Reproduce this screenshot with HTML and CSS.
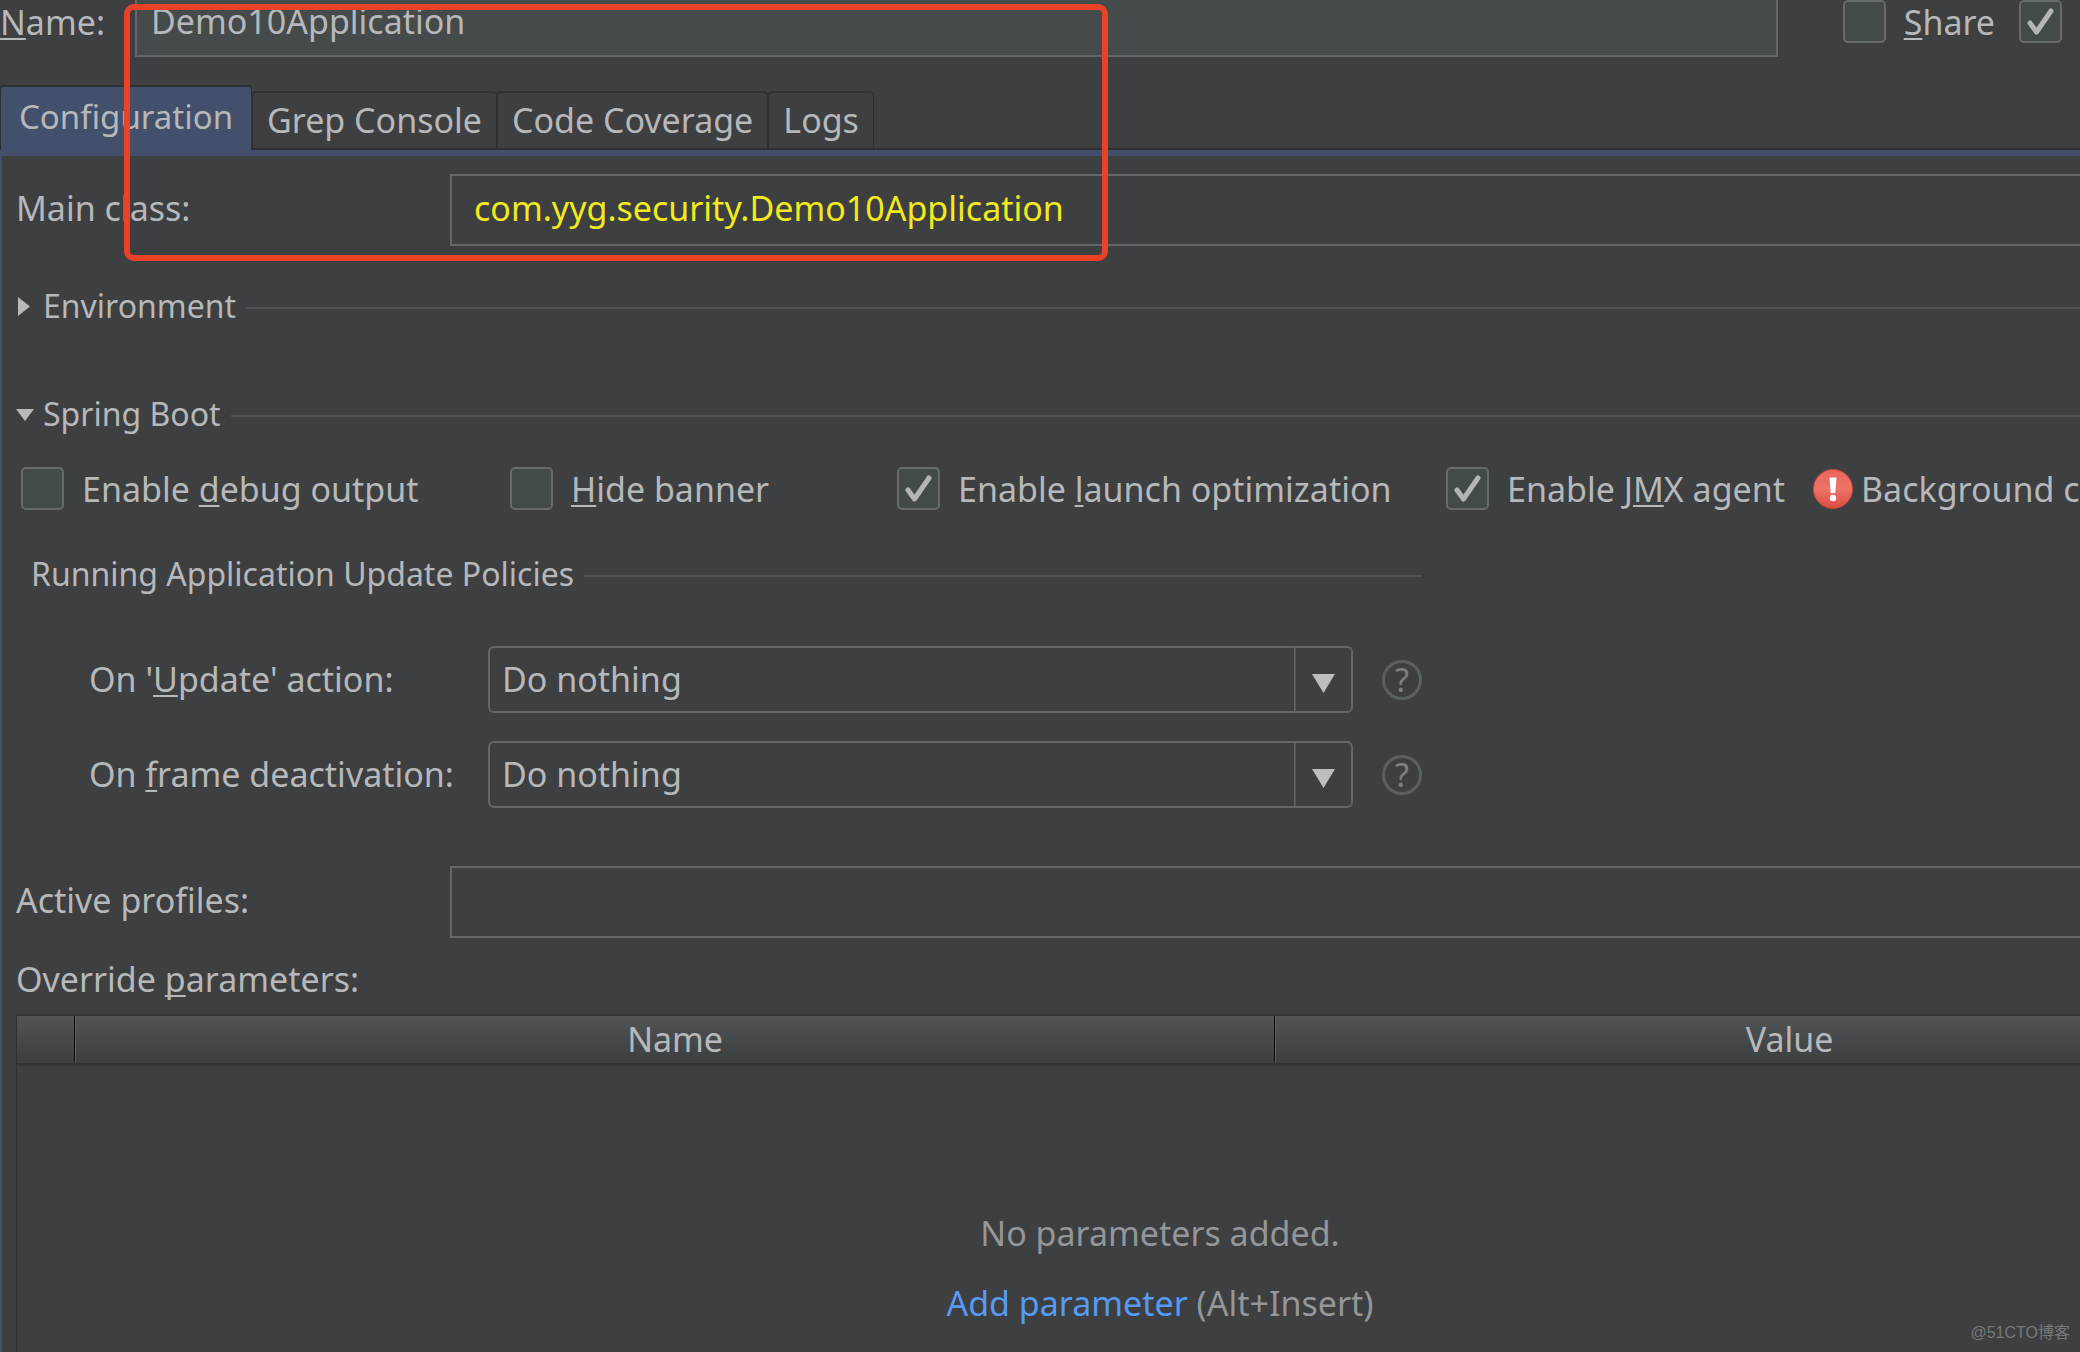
FILE: index.html
```html
<!DOCTYPE html>
<html lang="en">
<head>
<meta charset="utf-8">
<title>Run Configuration</title>
<link rel="stylesheet" href="styles.css">
</head>
<body>
<main class="dialog">
  <div class="name-row">
    <label class="name-label" for="name"><u>N</u>ame:</label>
    <input class="name-input" id="name" type="text" value="Demo10Application">
    <label class="check"><input type="checkbox"><span><u>S</u>hare</span></label>
    <input type="checkbox" checked aria-label="Allow parallel run">
  </div>

  <div class="tabs" role="tablist">
    <button class="tab tab-active" role="tab" aria-selected="true">Configuration</button>
    <button class="tab" role="tab">Grep Console</button>
    <button class="tab" role="tab">Code Coverage</button>
    <button class="tab" role="tab">Logs</button>
  </div>

  <section class="panel">
    <div class="field-row">
      <label for="main-class">Main class:</label>
      <input class="field main-class" id="main-class" type="text" value="com.yyg.security.Demo10Application">
    </div>

    <button class="section environment">
      <svg class="section-arrow" viewBox="0 0 20 20"><path d="M2 1 L14 10.5 L2 20 Z"/></svg>
      <span>Environment</span><span class="rule"></span>
    </button>
    <button class="section spring-boot">
      <svg class="section-arrow" viewBox="0 0 20 20"><path d="M0 5 H18 L9 17 Z"/></svg>
      <span>Spring Boot</span><span class="rule"></span>
    </button>

    <div class="options">
      <label class="check"><input type="checkbox"><span>Enable <u>d</u>ebug output</span></label>
      <label class="check"><input type="checkbox"><span><u>H</u>ide banner</span></label>
      <label class="check"><input type="checkbox" checked><span>Enable <u>l</u>aunch optimization</span></label>
      <label class="check"><input type="checkbox" checked><span>Enable J<u>M</u>X agent</span></label>
      <span class="warning">
        <svg width="40" height="40" viewBox="0 0 40 40">
          <defs><linearGradient id="red" x1="0" y1="0" x2="0" y2="1"><stop offset="0" stop-color="#e9655c"/><stop offset=".5" stop-color="#ee7468"/><stop offset="1" stop-color="#dc4a41"/></linearGradient></defs>
          <circle cx="20" cy="20" r="19.5" fill="url(#red)" stroke="#c9473f"/>
          <path d="M16.5 8.5 H23.5 L22.3 24 H17.7 Z" fill="#fff"/>
          <circle cx="20" cy="29" r="3.2" fill="#fff"/>
        </svg>
        <span>Background co</span>
      </span>
    </div>

    <fieldset class="policies">
      <legend class="policies-title"><span>Running Application Update Policies</span><span class="rule"></span></legend>
      <div class="policy">
        <label for="on-update">On '<u>U</u>pdate' action:</label>
        <span class="combo">
          <select id="on-update"><option>Do nothing</option></select>
          <svg class="combo-arrow" viewBox="0 0 58 65"><path d="M0.5 0 V65" class="divider"/><path d="M18 27 H41 L29.5 46 Z" class="arrow"/></svg>
        </span>
        <button class="help" aria-label="Help">?</button>
      </div>
      <div class="policy">
        <label for="on-frame">On <u>f</u>rame deactivation:</label>
        <span class="combo">
          <select id="on-frame"><option>Do nothing</option></select>
          <svg class="combo-arrow" viewBox="0 0 58 65"><path d="M0.5 0 V65" class="divider"/><path d="M18 27 H41 L29.5 46 Z" class="arrow"/></svg>
        </span>
        <button class="help" aria-label="Help">?</button>
      </div>
    </fieldset>

    <div class="field-row">
      <label for="profiles">Active profiles:</label>
      <input class="field" id="profiles" type="text">
    </div>

    <div class="override-label">Override <u>p</u>arameters:</div>
    <div class="parameters">
      <table class="param-table">
        <colgroup><col class="col-toggle"><col class="col-name"><col></colgroup>
        <thead><tr><th></th><th>Name</th><th>Value</th></tr></thead>
      </table>
      <div class="empty">
        <p>No parameters added.</p>
        <p><a href="#">Add parameter</a> (Alt+Insert)</p>
      </div>
    </div>
  </section>

  <div class="highlight"></div>
  <div class="watermark">@51CTO博客</div>
</main>
</body>
</html>
```
FILE: styles.css
```css
:root {
  --bg: #3d3f41;
  --text: #b6b8b9;
  --line: #646667;
  --rule: #505354;
  --dark: #2e3032;
  --blue: #42506c;
  --field: #454a4a;
}

* { box-sizing: border-box; }

body {
  margin: 0;
  background: var(--bg);
  color: var(--text);
  font: 34px/42px "Noto Sans", "Open Sans", sans-serif;
}

input, select, button { font: inherit; color: inherit; margin: 0; }

button { background: none; border: 0; padding: 0; text-align: left; }

u { text-decoration-thickness: 2px; text-underline-offset: 3px; text-decoration-skip-ink: none; }

.dialog {
  position: relative;
  display: flex;
  flex-direction: column;
  min-height: 100vh;
  overflow: hidden;
  white-space: nowrap;
}

/* Name row */
.name-row { display: flex; align-items: center; padding-right: 18px; }
.name-label { flex: 0 0 135px; }
.name-input {
  flex: 1;
  min-width: 0;
  height: 72px;
  margin: -16px 65px -14px 0;
  padding: 0 14px;
  background: var(--field);
  border: 2px solid var(--line);
}
.name-row .check { margin-right: 24px; }

.check { display: flex; align-items: center; gap: 18px; }

input[type="checkbox"] {
  appearance: none;
  flex: none;
  width: 43px;
  height: 43px;
  border: 2px solid #686b6c;
  border-radius: 5px;
  background: #434a4a;
}
input[type="checkbox"]:checked {
  background: #434a4a url("data:image/svg+xml,%3Csvg xmlns='http://www.w3.org/2000/svg' viewBox='0 0 39 39'%3E%3Cpath d='M9 21 L15.5 30 L30 9' fill='none' stroke='%23b4b6b6' stroke-width='5' stroke-linecap='round' stroke-linejoin='round'/%3E%3C/svg%3E") center / 39px 39px no-repeat;
}

/* Tabs */
.tabs {
  display: flex;
  align-items: flex-end;
  margin-top: 42px;
  border-bottom: 6px solid var(--blue);
  background: linear-gradient(var(--dark), var(--dark)) bottom / 100% 2px no-repeat;
}
.tab {
  height: 59px;
  padding: 0 14px 2px;
  border: 2px solid var(--dark);
  border-left-width: 1px;
  border-right-width: 1px;
  border-radius: 4px 4px 0 0;
}
.tab-active {
  height: 65px;
  padding: 0 18px 4px;
  background: var(--blue);
  border-bottom: 0;
  font-size: 33px;
}

/* Panel */
.panel {
  flex: 1;
  display: flex;
  flex-direction: column;
  padding: 18px 0 0 14px;
  border-left: 2px solid #3f4f6e;
}

.field-row { display: flex; align-items: center; }
.field-row label { flex: 0 0 434px; padding-bottom: 4px; }
.field {
  flex: 1;
  min-width: 0;
  height: 72px;
  padding: 0 22px 4px;
  background: transparent;
  border: 2px solid var(--line);
  border-right: 0;
}
.main-class { color: #f2ea1c; }

.rule { flex: 1; height: 2px; margin: 4px 0 0 10px; background: var(--rule); }

.section { display: flex; align-items: center; width: 100%; font-size: 32px; }
.section-arrow { flex: none; width: 20px; height: 20px; margin-right: 7px; fill: var(--text); }
.environment { margin-top: 39px; }
.spring-boot { margin-top: 66px; }

.options {
  display: grid;
  grid-template-columns: 489px 387px 549px 367px auto;
  align-items: center;
  margin: 32px 0 0 5px;
}
.warning { display: flex; align-items: center; gap: 8px; }

.policies { margin: 43px 0 58px; padding: 0; border: 0; width: 1406px; }
.policies-title { display: flex; align-items: center; width: 100%; padding: 0 0 0 15px; font-size: 32px; }
.policy { display: flex; align-items: center; padding-left: 73px; margin-top: 28px; }
.policies-title + .policy { margin-top: 51px; }
.policy label { flex: 0 0 399px; padding-bottom: 2px; }
.combo { position: relative; flex: 1; display: flex; }
.combo select {
  appearance: none;
  width: 100%;
  height: 67px;
  padding: 0 12px 2px;
  background: transparent;
  border: 2px solid var(--line);
  border-radius: 6px;
}
.combo-arrow {
  position: absolute;
  top: 1px;
  right: 1px;
  width: 58px;
  height: 65px;
  pointer-events: none;
}
.divider { stroke: var(--line); stroke-width: 2; }
.arrow { fill: #bbbdbe; }
.help {
  width: 40px;
  height: 40px;
  margin-left: 29px;
  border: 3px solid #5a6060;
  border-radius: 50%;
  color: #7c8181;
  font-size: 32px;
  line-height: 34px;
  text-align: center;
}

.override-label { margin-top: 20px; }

/* The table runs past the right edge of the dialog. */
.parameters { flex: 1; margin: 14px -223px 0 0; border-left: 1px solid var(--dark); }
.param-table {
  width: 100%;
  table-layout: fixed;
  border-collapse: collapse;
  border-top: 2px solid #343638;
  border-bottom: 3px solid #323536;
  background: linear-gradient(#525657, #474a4c 45%, #3b3f40);
}
.col-toggle { width: 58px; }
.col-name { width: 52.5%; }
.param-table th {
  height: 49px;
  padding: 0;
  font-weight: 400;
  text-align: center;
  border-left: 2px groove #5c6062;
}
.param-table th:first-child { border-left: 0; }

.empty { margin-top: 146px; color: #949698; text-align: center; }
.empty p { margin: 0 0 28px; }
.empty a { color: #579af4; text-decoration: none; }

/* Overlays */
.highlight {
  position: absolute;
  top: 4px;
  left: 124px;
  width: 984px;
  height: 257px;
  border: 6px solid #e94227;
  border-radius: 10px;
}
.watermark {
  position: absolute;
  right: 10px;
  bottom: 7px;
  color: #77797a;
  font: 16px/24px "Liberation Sans", "Noto Sans CJK SC", sans-serif;
}
```
